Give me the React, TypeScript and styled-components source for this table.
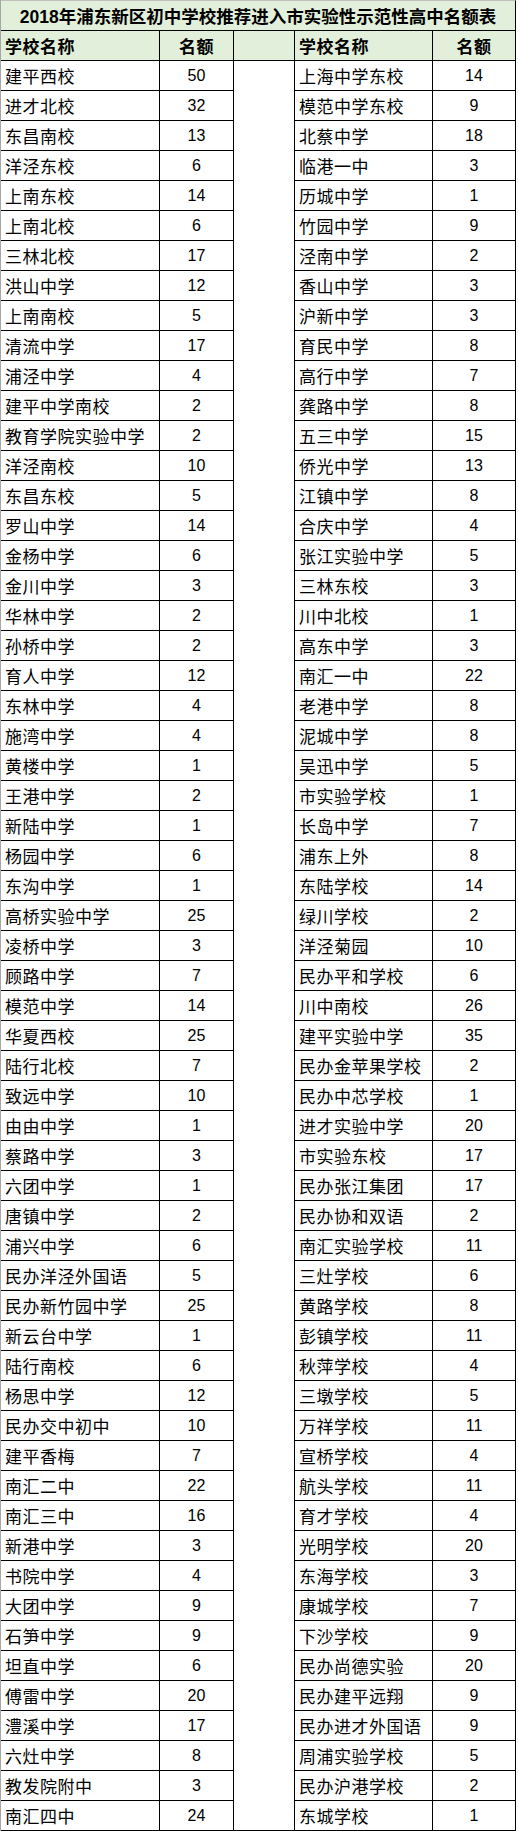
import React from "react";
import styled, { createGlobalStyle } from "styled-components";

const GlobalStyle = createGlobalStyle`
  html, body {
    margin: 0;
    padding: 0;
    background: #fff;
  }
  body {
    font-family: "Liberation Sans", "Noto Sans CJK SC", sans-serif;
    color: #000;
  }
`;

const leftSchools: [string, number][] = [
  ["建平西校", 50], ["进才北校", 32], ["东昌南校", 13], ["洋泾东校", 6],
  ["上南东校", 14], ["上南北校", 6], ["三林北校", 17], ["洪山中学", 12],
  ["上南南校", 5], ["清流中学", 17], ["浦泾中学", 4], ["建平中学南校", 2],
  ["教育学院实验中学", 2], ["洋泾南校", 10], ["东昌东校", 5], ["罗山中学", 14],
  ["金杨中学", 6], ["金川中学", 3], ["华林中学", 2], ["孙桥中学", 2],
  ["育人中学", 12], ["东林中学", 4], ["施湾中学", 4], ["黄楼中学", 1],
  ["王港中学", 2], ["新陆中学", 1], ["杨园中学", 6], ["东沟中学", 1],
  ["高桥实验中学", 25], ["凌桥中学", 3], ["顾路中学", 7], ["模范中学", 14],
  ["华夏西校", 25], ["陆行北校", 7], ["致远中学", 10], ["由由中学", 1],
  ["蔡路中学", 3], ["六团中学", 1], ["唐镇中学", 2], ["浦兴中学", 6],
  ["民办洋泾外国语", 5], ["民办新竹园中学", 25], ["新云台中学", 1], ["陆行南校", 6],
  ["杨思中学", 12], ["民办交中初中", 10], ["建平香梅", 7], ["南汇二中", 22],
  ["南汇三中", 16], ["新港中学", 3], ["书院中学", 4], ["大团中学", 9],
  ["石笋中学", 9], ["坦直中学", 6], ["傅雷中学", 20], ["澧溪中学", 17],
  ["六灶中学", 8], ["教发院附中", 3], ["南汇四中", 24],
];

const rightSchools: [string, number][] = [
  ["上海中学东校", 14], ["模范中学东校", 9], ["北蔡中学", 18], ["临港一中", 3],
  ["历城中学", 1], ["竹园中学", 9], ["泾南中学", 2], ["香山中学", 3],
  ["沪新中学", 3], ["育民中学", 8], ["高行中学", 7], ["龚路中学", 8],
  ["五三中学", 15], ["侨光中学", 13], ["江镇中学", 8], ["合庆中学", 4],
  ["张江实验中学", 5], ["三林东校", 3], ["川中北校", 1], ["高东中学", 3],
  ["南汇一中", 22], ["老港中学", 8], ["泥城中学", 8], ["吴迅中学", 5],
  ["市实验学校", 1], ["长岛中学", 7], ["浦东上外", 8], ["东陆学校", 14],
  ["绿川学校", 2], ["洋泾菊园", 10], ["民办平和学校", 6], ["川中南校", 26],
  ["建平实验中学", 35], ["民办金苹果学校", 2], ["民办中芯学校", 1], ["进才实验中学", 20],
  ["市实验东校", 17], ["民办张江集团", 17], ["民办协和双语", 2], ["南汇实验学校", 11],
  ["三灶学校", 6], ["黄路学校", 8], ["彭镇学校", 11], ["秋萍学校", 4],
  ["三墩学校", 5], ["万祥学校", 11], ["宣桥学校", 4], ["航头学校", 11],
  ["育才学校", 4], ["光明学校", 20], ["东海学校", 3], ["康城学校", 7],
  ["下沙学校", 9], ["民办尚德实验", 20], ["民办建平远翔", 9], ["民办进才外国语", 9],
  ["周浦实验学校", 5], ["民办沪港学校", 2], ["东城学校", 1],
];

const Sheet = styled.div`
  display: grid;
  grid-template-columns: 159px 74px 61px 138px 83px;
  grid-template-rows: 31px;
  grid-auto-rows: 30px;
  width: 516px;
  border-left: 1px solid #a6a6a6;
`;

const Title = styled.div`
  grid-column: 1 / -1;
  display: flex;
  align-items: center;
  justify-content: center;
  box-sizing: border-box;
  background: #e2efda;
  border-top: 1px solid #bfbfbf;
  border-bottom: 1px solid #000;
  border-right: 1px solid #000;
  font-size: 17.5px;
  font-weight: 700;
  white-space: nowrap;
`;

const Cell = styled.div<{ $center?: boolean; $head?: boolean }>`
  display: flex;
  align-items: center;
  justify-content: ${({ $center }) => ($center ? "center" : "flex-start")};
  box-sizing: border-box;
  padding-left: ${({ $center }) => ($center ? "0" : "4px")};
  border-right: 1px solid #000;
  border-bottom: 1px solid #000;
  background: ${({ $head }) => ($head ? "#e2efda" : "#fff")};
  font-size: 17px;
  font-weight: ${({ $head }) => ($head ? 700 : 400)};
  letter-spacing: 0.5px;
  white-space: nowrap;
`;

const Count = styled(Cell)`
  font-size: 16px;
  letter-spacing: 0;
`;

const Gap = styled.div`
  grid-column: 3;
  grid-row: span 59;
  box-sizing: border-box;
  border-right: 1px solid #000;
  border-bottom: 1px solid #000;
  background: #fff;
`;

export default function App() {
  return (
    <>
      <GlobalStyle />
      <Sheet>
        <Title>2018年浦东新区初中学校推荐进入市实验性示范性高中名额表</Title>
        <Cell $head>学校名称</Cell>
        <Cell $head $center>名额</Cell>
        <Cell $head />
        <Cell $head>学校名称</Cell>
        <Cell $head $center>名额</Cell>
        {leftSchools.map(([name, count], i) => (
          <React.Fragment key={name}>
            <Cell>{name}</Cell>
            <Count $center>{count}</Count>
            {i === 0 && <Gap />}
            <Cell>{rightSchools[i][0]}</Cell>
            <Count $center>{rightSchools[i][1]}</Count>
          </React.Fragment>
        ))}
      </Sheet>
    </>
  );
}
